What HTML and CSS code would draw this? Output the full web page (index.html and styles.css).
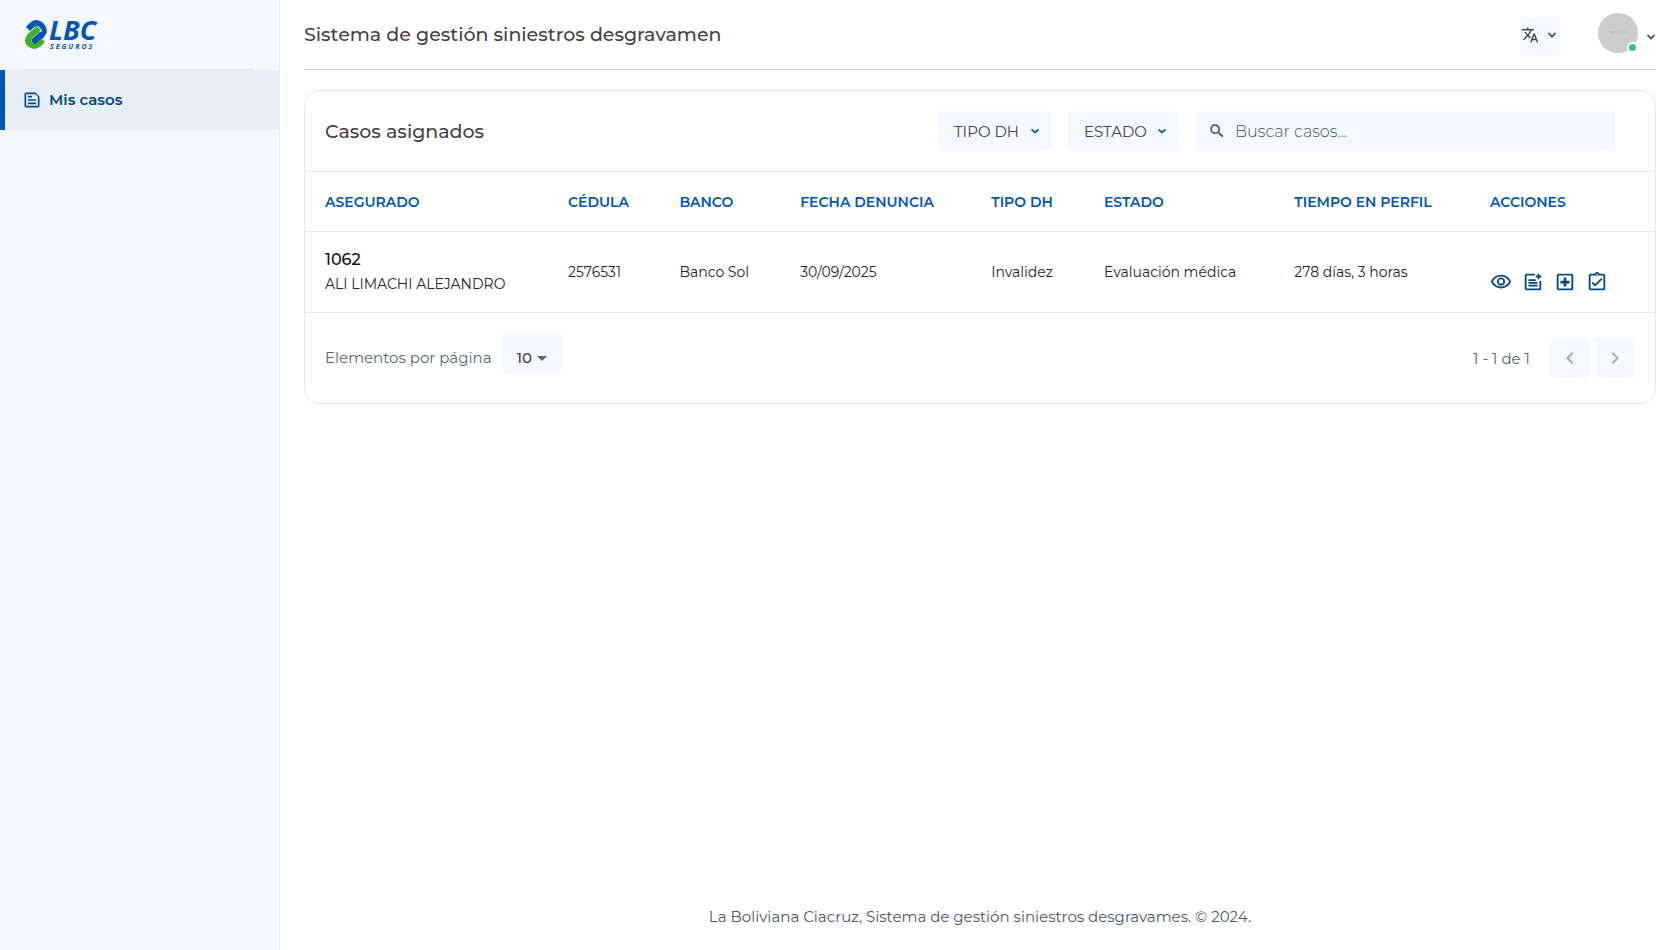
FILE: index.html
```html
<!DOCTYPE html>
<html lang="es">
    <head>
        <meta charset="UTF-8" />
        <meta name="viewport" content="width=device-width, initial-scale=1.0" />
        <title>Sistema de gestión siniestros desgravamen</title>
        <link rel="stylesheet" href="styles.css">
    </head>
    <body>
        <aside class="sidebar">
            <a class="logo" href="#" aria-label="LBC Seguros">
                <svg viewBox="0 0 76 30" width="76" height="30" fill="none" stroke-width="6">
                    <path stroke="#0055b8" d="M3 9L6 6Q11 1 16 5Q21 10 17 15L8 23" />
                    <path stroke="#f5f8fd" stroke-width="7" d="M15 8L5 17Q1 21 5 24" />
                    <path stroke="#43b02a" d="M14 8L5 16Q1 21 5 24Q10 28 15 23L18 20" />
                    <path stroke="#0055b8" d="M17 14L8 22" />
                    <text class="logo-name" x="24" y="20">LBC</text>
                    <text class="logo-sub" x="25" y="29">SEGUROS</text>
                </svg>
            </a>
            <nav class="menu">
                <a class="menu-item active" href="#">
                    <svg viewBox="0 0 24 24" width="20" height="20" fill="currentColor">
                        <path d="M19 5v14H5V5h11l3 3M16 3H5c-1.100 0-2 .9-2 2v14c0 1.100.9 2 2 2h14c1.100 0 2-.9 2-2V8l-5-5zM7 17h10v-2H7v2zM7 7v2h5V7H7zm0 6h10v-2H7v2z" />
                    </svg>
                    Mis casos
                </a>
            </nav>
        </aside>

        <div class="page">
            <header class="topbar">
                <h1>Sistema de gestión siniestros desgravamen</h1>
                <div class="topbar-actions">
                    <button class="lang" type="button" aria-label="Idioma">
                        <svg viewBox="0 0 24 24" width="18" height="18" fill="currentColor">
                            <path d="M12.870 15.070l-2.540-2.510.03-.03A17.520 17.520 0 0 0 14.070 6H17V4h-7V2H8v2H1v1.990h11.170C11.500 7.920 10.440 9.750 9 11.350 8.070 10.320 7.300 9.190 6.690 8h-2c.73 1.630 1.730 3.170 2.980 4.560l-5.090 5.020L4 19l5-5 3.110 3.110.76-2.040zM18.500 10h-2L12 22h2l1.120-3h4.750L21 22h2l-4.500-12zm-2.620 7l1.620-4.330L19.120 17h-3.240z" />
                        </svg>
                        <svg class="chevron" viewBox="0 0 10 10" width="10" height="10">
                            <path d="M1.500 3L5 6.500 8.500 3" />
                        </svg>
                    </button>
                    <button class="user" type="button" aria-label="Usuario">
                        <span class="avatar">160 x 160<span class="status"></span></span>
                        <svg class="chevron" viewBox="0 0 10 10" width="10" height="10">
                            <path d="M1.500 3L5 6.500 8.500 3" />
                        </svg>
                    </button>
                </div>
            </header>

            <main class="card">
                <div class="card-header">
                    <h2>Casos asignados</h2>
                    <div class="filters">
                        <div class="filter">
                            <select aria-label="Tipo DH">
                                <option>TIPO DH</option>
                            </select>
                            <svg class="chevron" viewBox="0 0 10 10" width="10" height="10">
                                <path d="M1.500 3.500L5 6.500l3.500-3" />
                            </svg>
                        </div>
                        <div class="filter">
                            <select aria-label="Estado">
                                <option>ESTADO</option>
                            </select>
                            <svg class="chevron" viewBox="0 0 10 10" width="10" height="10">
                                <path d="M1.500 3.500L5 6.500l3.500-3" />
                            </svg>
                        </div>
                        <div class="search">
                            <svg viewBox="0 0 24 24" width="18" height="18" fill="currentColor">
                                <path d="M15.500 14h-.79l-.28-.27A6.471 6.471 0 0 0 16 9.500 6.500 6.500 0 1 0 9.500 16c1.610 0 3.090-.59 4.230-1.570l.27.28v.79l5 4.990L20.490 19l-4.990-5zm-6 0C7.010 14 5 11.990 5 9.500S7.010 5 9.500 5 14 7.010 14 9.500 11.990 14 9.500 14z" />
                            </svg>
                            <input type="text" placeholder="Buscar casos..." aria-label="Buscar casos" />
                        </div>
                    </div>
                </div>

                <table class="cases">
                    <thead>
                        <tr>
                            <th class="col-name">ASEGURADO</th>
                            <th class="col-id">CÉDULA</th>
                            <th class="col-bank">BANCO</th>
                            <th class="col-date">FECHA DENUNCIA</th>
                            <th class="col-type">TIPO DH</th>
                            <th class="col-state">ESTADO</th>
                            <th class="col-time">TIEMPO EN PERFIL</th>
                            <th>ACCIONES</th>
                        </tr>
                    </thead>
                    <tbody>
                        <tr>
                            <td>
                                <span class="case-number">1062</span>
                                <span class="case-name">ALI LIMACHI ALEJANDRO</span>
                            </td>
                            <td>2576531</td>
                            <td>Banco Sol</td>
                            <td>30/09/2025</td>
                            <td>Invalidez</td>
                            <td>Evaluación médica</td>
                            <td>278 días, 3 horas</td>
                            <td>
                                <div class="actions">
                                    <button type="button" aria-label="Ver">
                                        <svg viewBox="0 0 24 24" width="22" height="22" fill="currentColor">
                                            <path d="M12 6c3.790 0 7.170 2.130 8.820 5.500C19.170 14.870 15.790 17 12 17s-7.170-2.130-8.820-5.500C4.830 8.130 8.210 6 12 6m0-2C7 4 2.730 7.110 1 11.500 2.730 15.890 7 19 12 19s9.270-3.110 11-7.500C21.270 7.110 17 4 12 4zm0 5a2.500 2.500 0 0 1 0 5 2.500 2.500 0 0 1 0-5m0-2c-2.480 0-4.500 2.020-4.500 4.500S9.520 16 12 16s4.500-2.020 4.500-4.500S14.480 7 12 7z" />
                                        </svg>
                                    </button>
                                    <button type="button" aria-label="Agregar nota">
                                        <svg viewBox="0 0 24 24" width="22" height="22" fill="currentColor">
                                            <path d="M19 11v8H5V5h9V3H5c-1.100 0-2 .9-2 2v14c0 1.100.9 2 2 2h14c1.100 0 2-.9 2-2v-8h-2zM7 9h8v2H7zM7 12h10v2H7zM7 15h10v2H7zM17 3h2v2h2v2h-2v2h-2V7h-2V5h2z" />
                                        </svg>
                                    </button>
                                    <button type="button" aria-label="Evaluación médica">
                                        <svg viewBox="0 0 24 24" width="22" height="22" fill="currentColor">
                                            <path d="M19 3H5c-1.100 0-2 .9-2 2v14c0 1.100.9 2 2 2h14c1.100 0 2-.9 2-2V5c0-1.100-.9-2-2-2zm0 16H5V5h14v14zM10.500 17h3v-3.500H17v-3h-3.500V7h-3v3.500H7v3h3.500V17z" />
                                        </svg>
                                    </button>
                                    <button type="button" aria-label="Completar">
                                        <svg viewBox="0 0 24 24" width="22" height="22" fill="currentColor">
                                            <path d="M19 3h-4.180C14.400 1.840 13.300 1 12 1s-2.400.84-2.820 2H5c-1.100 0-2 .9-2 2v14c0 1.100.9 2 2 2h14c1.100 0 2-.9 2-2V5c0-1.100-.9-2-2-2zm-7-.25a.75.750 0 0 1 0 1.500.75.750 0 0 1 0-1.500zM19 19H5V5h14v14zM17.990 9l-1.410-1.420-6.590 6.590-2.580-2.570-1.420 1.410 4 3.990z" />
                                        </svg>
                                    </button>
                                </div>
                            </td>
                        </tr>
                    </tbody>
                </table>

                <div class="card-footer">
                    <div class="page-size">
                        <label for="pageSize">Elementos por página</label>
                        <div class="page-size-select">
                            <select id="pageSize">
                                <option>10</option>
                            </select>
                            <svg viewBox="0 0 10 5" width="10" height="5" fill="currentColor">
                                <path d="M0 0h10L5 5z" />
                            </svg>
                        </div>
                    </div>
                    <div class="pager">
                        <span class="range">1 - 1 de 1</span>
                        <button type="button" aria-label="Anterior" disabled>
                            <svg viewBox="0 0 24 24" width="24" height="24" fill="currentColor">
                                <path d="M15.410 7.410L14 6l-6 6 6 6 1.410-1.410L10.830 12z" />
                            </svg>
                        </button>
                        <button type="button" aria-label="Siguiente" disabled>
                            <svg viewBox="0 0 24 24" width="24" height="24" fill="currentColor">
                                <path d="M10 6L8.590 7.410 13.170 12l-4.580 4.590L10 18l6-6z" />
                            </svg>
                        </button>
                    </div>
                </div>
            </main>

            <footer class="footer">La Boliviana Ciacruz, Sistema de gestión siniestros desgravames. © 2024.</footer>
        </div>
    </body>
</html>
```
FILE: styles.css
```css
*,
*::before,
*::after {
    box-sizing: border-box;
}

body {
    margin: 0;
    min-height: 100vh;
    display: flex;
    background: #fff;
    color: #212529;
    font-family: Montserrat, Inter, sans-serif;
    font-size: 14px;
    line-height: 24px;
}

a {
    color: inherit;
    text-decoration: none;
}

button,
select,
input {
    font: inherit;
    color: inherit;
    border: 0;
    margin: 0;
    padding: 0;
    background: none;
}

button {
    cursor: pointer;
}

svg {
    display: block;
    flex: none;
}

.chevron {
    fill: none;
    stroke: currentColor;
    stroke-width: 1.7;
}

/* sidebar */
.sidebar {
    flex: 0 0 280px;
    background: #f5f8fd;
    border-right: 1px solid #e8eaec;
}

.logo {
    display: flex;
    align-items: center;
    height: 70px;
    margin: 0 25px;
    border-bottom: 1px solid #e3e5e8;
}

.logo svg {
    overflow: visible;
}

.logo text {
    fill: #0055b8;
    font-family: "Open Sans", sans-serif;
    font-style: italic;
    font-weight: 700;
}

.logo .logo-name {
    font-size: 27px;
}

.logo .logo-sub {
    font-size: 7px;
    letter-spacing: 2px;
}

.menu-item {
    display: flex;
    align-items: center;
    gap: 7px;
    height: 60px;
    padding-left: 22px;
    color: #004b80;
    font-size: 15px;
    font-weight: 600;
}

.menu-item.active {
    padding-left: 17px;
    border-left: 5px solid #0055b8;
    background: #e7eef8;
}

/* top bar */
.page {
    flex: 1;
    min-width: 0;
    display: flex;
    flex-direction: column;
    padding: 0 24px;
}

.topbar {
    display: flex;
    align-items: center;
    justify-content: space-between;
    height: 70px;
    margin-bottom: 20px;
    border-bottom: 1px solid #cfcfcf;
    color: #444;
}

h1,
h2 {
    margin: 0;
    color: #444;
    font-size: 19px;
    font-weight: 500;
}

.topbar-actions {
    display: flex;
    align-items: center;
    gap: 38px;
}

.lang {
    display: flex;
    align-items: center;
    gap: 8px;
    width: 40px;
    height: 40px;
    padding: 0 0 3px 1px;
    border-radius: 5px;
    background: #f5f8fd;
}

.lang,
.user {
    margin-top: 4px;
}

.user {
    display: flex;
    align-items: center;
    gap: 8px;
}

.avatar {
    position: relative;
    width: 40px;
    height: 40px;
    margin-bottom: 8px;
    border-radius: 50%;
    background: #ccc;
    color: #aaa;
    font-size: 4px;
    line-height: 40px;
    text-align: center;
}

.status {
    position: absolute;
    right: 0;
    bottom: 0;
    width: 11px;
    height: 11px;
    border: 2px solid #fff;
    border-radius: 50%;
    background: #2ecc71;
}

/* card */
.card {
    border: 1px solid #e8e8e8;
    border-radius: 16px;
}

.card-header {
    display: flex;
    align-items: center;
    justify-content: space-between;
    padding: 20px 40px 20px 20px;
}

.card-header h2 {
    padding-top: 2px;
}

.filters {
    display: flex;
    gap: 16px;
}

.filter,
.search {
    position: relative;
    height: 40px;
    border-radius: 4px;
    background: #f5f8fd;
    color: #444;
}

.filter select {
    display: block;
    height: 40px;
    padding: 2px 32px 0 16px;
    appearance: none;
    font-size: 15px;
}

.filter .chevron {
    position: absolute;
    top: 15px;
    right: 12px;
    color: #0055b8;
    pointer-events: none;
}

.search {
    display: flex;
    align-items: center;
    gap: 9px;
    width: 420px;
    padding: 0 13px;
}

.search input {
    flex: 1;
    height: 40px;
    outline: 0;
    font-size: 16px;
    font-weight: 300;
}

.search input::placeholder {
    color: #455a64;
    opacity: 1;
}

.cases {
    width: 100%;
    table-layout: fixed;
    border-collapse: collapse;
}

.cases th,
.cases td {
    padding: 0 0 0 20px;
    border-top: 1px solid #e8e8e8;
    border-bottom: 1px solid #e8e8e8;
    text-align: left;
    white-space: nowrap;
}

.cases th {
    height: 60px;
    color: #0055b8;
    font-weight: 600;
}

.cases td {
    height: 81px;
}

.col-name {
    width: 18%;
}

.col-id {
    width: 8.25%;
}

.col-bank {
    width: 8.95%;
}

.col-date {
    width: 14.15%;
}

.col-type {
    width: 8.35%;
}

.col-state {
    width: 14.1%;
}

.col-time {
    width: 14.5%;
}

.case-number,
.case-name {
    display: block;
}

.case-number {
    color: #111;
    font-size: 16px;
    font-weight: 500;
}

.actions {
    display: flex;
    gap: 10px;
    padding-top: 20px;
    color: #004b80;
}

.card-footer {
    display: flex;
    justify-content: space-between;
    padding: 20px 20px 25px;
    color: #506873;
    font-size: 15px;
}

.page-size,
.pager {
    display: flex;
    align-items: center;
}

.page-size {
    align-items: flex-start;
    gap: 10px;
}

.page-size label {
    padding-top: 13px;
}

.page-size-select {
    position: relative;
    border-radius: 4px;
    background: #f5f8fd;
}

.page-size-select select {
    display: block;
    width: 60px;
    height: 40px;
    padding: 10px 0 0 15px;
    appearance: none;
    color: #444;
    font-weight: 500;
}

.page-size-select svg {
    position: absolute;
    top: 23px;
    right: 15px;
    pointer-events: none;
}

.pager {
    gap: 5px;
    padding-top: 5px;
}

.pager .range {
    margin-right: 15px;
    padding-top: 2px;
}

.pager button {
    display: flex;
    align-items: center;
    justify-content: center;
    width: 40px;
    height: 40px;
    border-radius: 4px;
    background: #f5f8fd;
    color: #aaa;
}

.footer {
    margin-top: auto;
    padding: 21px 0;
    color: #455a64;
    font-size: 15px;
    text-align: center;
}
```
